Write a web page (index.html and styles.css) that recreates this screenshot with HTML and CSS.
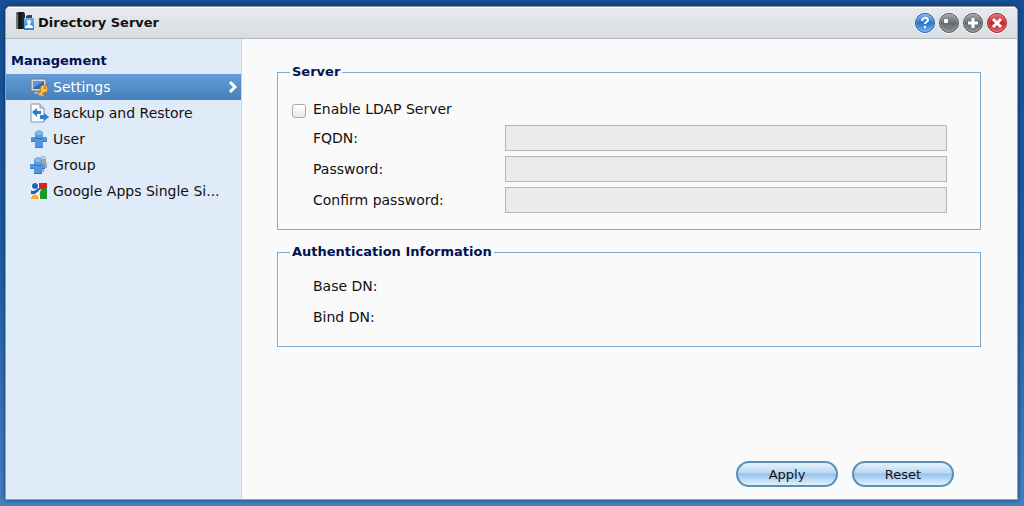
FILE: index.html
```
<!DOCTYPE html>
<html lang="en">
  <head>
    <meta charset="utf-8">
    <title>Directory Server</title>
    <link rel="stylesheet" href="styles.css">
  </head>
  <body>
    <div class="window">
      <header class="titlebar">
        <svg class="titlebar__icon" width="20" height="20" viewBox="0 0 20 20">
          <defs>
            <linearGradient id="tower" x1="0" x2="1"><stop offset="0" stop-color="#555"/><stop offset=".4" stop-color="#111"/><stop offset="1" stop-color="#333"/></linearGradient>
            <linearGradient id="blue" x1="0" x2="0" y1="0" y2="1"><stop offset="0" stop-color="#6cb4f2"/><stop offset="1" stop-color="#2f7fd0"/></linearGradient>
          </defs>
          <path d="M1 2l2-1h6l1 2v15H1z" fill="url(#tower)"/>
          <path d="M1 3v15h2V3z" fill="#777"/>
          <path d="M11 5l2-1h4v3h-6z" fill="#444"/>
          <rect x="9" y="7" width="10" height="12" fill="url(#blue)"/>
          <circle cx="14" cy="11" r="2" fill="#fff"/>
          <path d="M13 12h2v2c2 0 3 1 3 3h-8c0-2 1-3 3-3z" fill="#fff"/>
        </svg>
        <h1 class="titlebar__title">Directory Server</h1>
        <div class="titlebar__buttons">
          <button class="win-button win-button--blue" type="button" aria-label="Help">
            <svg width="20" height="20" viewBox="0 0 20 20"><path d="M7 8c0-4 6-4 6-1 0 2-3 2-3 4M10 13v2" fill="none" stroke="#fff" stroke-width="2"/></svg>
          </button>
          <button class="win-button" type="button" aria-label="Minimize">
            <svg width="20" height="20" viewBox="0 0 20 20"><rect x="5" y="6" width="4" height="4" rx="1" fill="#fff"/></svg>
          </button>
          <button class="win-button" type="button" aria-label="Maximize">
            <svg width="20" height="20" viewBox="0 0 20 20"><path d="M10 5v10M5 10h10" stroke="#fff" stroke-width="3"/></svg>
          </button>
          <button class="win-button win-button--red" type="button" aria-label="Close">
            <svg width="20" height="20" viewBox="0 0 20 20"><path d="M6 6l8 8M14 6l-8 8" stroke="#fff" stroke-width="3"/></svg>
          </button>
        </div>
      </header>

      <div class="content">
        <nav class="sidebar">
          <h2 class="sidebar__title">Management</h2>
          <ul class="menu">
            <li>
              <a class="menu__link menu__link--active" href="#settings">
                <svg width="20" height="20" viewBox="0 0 20 20">
                  <path d="M6 14h6l1 3H5z" fill="#b0b0b0"/>
                  <rect x="2" y="2" width="15" height="12" rx="1" fill="#d5d9dd" stroke="#777"/>
                  <rect x="4" y="4" width="11" height="8" fill="#2c6cb6"/>
                  <path d="M4 4h11L4 11z" fill="#5b98d8"/>
                  <path d="M10 18l5-5" stroke="#b87318" stroke-width="4"/>
                  <circle cx="15" cy="12" r="4" fill="#f7bd50" stroke="#b87318"/>
                  <path d="M10 18l5-5M11 16l3 3" stroke="#f7bd50" stroke-width="2"/>
                  <circle cx="16" cy="11" r="1" fill="#9a6420"/>
                </svg>
                <span class="menu__text">Settings</span>
                <svg class="menu__arrow" width="10" height="14" viewBox="0 0 10 14"><path d="M2 2l5 5-5 5" fill="none" stroke="#fff" stroke-width="3"/></svg>
              </a>
            </li>
            <li>
              <a class="menu__link" href="#backup">
                <svg width="20" height="20" viewBox="0 0 20 20">
                  <path d="M2 1h9l4 4v14H2z" fill="#fbfcfe" stroke="#8b929a"/>
                  <path d="M11 1v4h4" fill="#d5dce4" stroke="#8b929a"/>
                  <path d="M3 9l5-4v3h4v3H8v3z" fill="#2f7fcd"/>
                  <path d="M20 14l-5-4v2h-4v4h4v2z" fill="#2f7fcd"/>
                </svg>
                <span class="menu__text">Backup and Restore</span>
              </a>
            </li>
            <li>
              <a class="menu__link" href="#user">
                <svg width="20" height="20" viewBox="0 0 20 20">
                  <path d="M3 8h14q1 0 1 1v4h-4v5q0 1-1 1H7q-1 0-1-1v-5H2V9q0-1 1-1z" fill="#5096de"/>
                  <path d="M2 12h4v1H2zM14 12h4v1h-4zM6 18h8v1H6z" fill="#3977b9"/>
                  <path d="M6 8h8l-1 2H7z" fill="#3672b5"/>
                  <path d="M6 5c0-5 8-5 8 0v3q-4 2-8 0z" fill="#5a9de2"/>
                  <ellipse cx="10" cy="4" rx="3" ry="2" fill="#86b9ee"/>
                </svg>
                <span class="menu__text">User</span>
              </a>
            </li>
            <li>
              <a class="menu__link" href="#group">
                <svg width="20" height="20" viewBox="0 0 20 20">
                  <path d="M11 4c0-4 6-4 6 0v3l1 1v5h-3v4h-4z" fill="#a3a7ac"/>
                  <path d="M12 4c0-3 4-3 4 0z" fill="#d0d3d6"/>
                  <path d="M2 9h13q1 0 1 1v4h-3v4q0 1-1 1H6q-1 0-1-1v-4H1v-4q0-1 1-1z" fill="#5096de"/>
                  <path d="M1 13h4v1H1zM13 13h3v1h-3zM5 18h8v1H5z" fill="#3977b9"/>
                  <path d="M5 9h8l-1 2H6z" fill="#3672b5"/>
                  <path d="M5 6c0-5 8-5 8 0v3q-4 2-8 0z" fill="#5a9de2"/>
                  <ellipse cx="9" cy="5" rx="3" ry="2" fill="#86b9ee"/>
                </svg>
                <span class="menu__text">Group</span>
              </a>
            </li>
            <li>
              <a class="menu__link" href="#google">
                <svg width="20" height="20" viewBox="0 0 20 20">
                  <path d="M2 2h16v16H2z" fill="#fff"/>
                  <path d="M10 2h8v6h-5l-3 1z" fill="#e21d1d"/>
                  <path d="M18 7v11h-7c1-3-2-5 1-9 1-2 3-2 6-2z" fill="#159a2b"/>
                  <circle cx="6" cy="5" r="3" fill="#1c67b5"/>
                  <path d="M2 9c3 2 5 0 7-2l2 1c-2 4-6 6-9 5z" fill="#1c67b5"/>
                  <path d="M2 18c0-6 8-6 8 0z" fill="#f6ab33"/>
                </svg>
                <span class="menu__text">Google Apps Single Si...</span>
              </a>
            </li>
          </ul>
        </nav>

        <form class="settings" action="">
          <fieldset class="group">
            <legend class="group__title">Server</legend>
            <div class="group__check">
              <input id="enable" class="checkbox" type="checkbox">
              <label for="enable">Enable LDAP Server</label>
            </div>
            <div class="row">
              <label class="row__label" for="fqdn">FQDN:</label>
              <input id="fqdn" class="row__input" type="text" disabled>
            </div>
            <div class="row">
              <label class="row__label" for="password">Password:</label>
              <input id="password" class="row__input" type="password" disabled>
            </div>
            <div class="row">
              <label class="row__label" for="confirm">Confirm password:</label>
              <input id="confirm" class="row__input" type="password" disabled>
            </div>
          </fieldset>

          <fieldset class="group group--info">
            <legend class="group__title">Authentication Information</legend>
            <div class="row"><span class="row__label">Base DN:</span></div>
            <div class="row"><span class="row__label">Bind DN:</span></div>
          </fieldset>

          <div class="actions">
            <button class="button" type="submit">Apply</button>
            <button class="button" type="reset">Reset</button>
          </div>
        </form>
      </div>
    </div>
  </body>
</html>
```

FILE: styles.css
```
* { box-sizing: border-box; }

body {
  margin: 0;
  min-height: 100vh;
  padding: 6px 6px 6px 5px;
  display: flex;
  background: linear-gradient(#164f94, #1d5ca4 50%, #4380bd);
  font-family: Verdana, "DejaVu Sans", sans-serif;
  font-size: 14px;
  line-height: 18px;
  color: #111;
}

.window {
  flex: 1;
  display: flex;
  flex-direction: column;
  border: 1px solid #9b9fa5;
  border-radius: 5px 5px 0 0;
  background: #fafafa;
  box-shadow: 0 0 4px rgba(0, 20, 50, 0.6);
  overflow: hidden;
}

.titlebar {
  display: flex;
  align-items: center;
  height: 32px;
  padding: 0 10px 0 9px;
  border-top: 1px solid #fff;
  border-bottom: 1px solid #b4b6b9;
  background: linear-gradient(#e6eaee, #d8dde1);
}
.titlebar__icon { margin-bottom: 4px; }
.titlebar__title { flex: 1; margin: 0 0 0 3px; font-size: 13px; line-height: 18px; }
.titlebar__buttons { display: flex; gap: 4px; }

.win-button {
  width: 20px;
  height: 20px;
  padding: 0;
  border: 1px solid #55585c;
  border-radius: 50%;
  background: linear-gradient(#a5a8aa, #66696c 50%, #8d9092);
  box-shadow: inset 0 0 0 1px rgba(255, 255, 255, 0.25), 0 1px 1px #fff;
  display: flex;
  align-items: center;
  justify-content: center;
}
.win-button svg { flex: none; }
.win-button--blue { border-color: #1c5ca8; background: linear-gradient(#80b9ed, #2874c8 50%, #72b8f3); }
.win-button--red { border-color: #a51e22; background: linear-gradient(#e07072, #c4262a 50%, #df6060); }

.content { flex: 1; display: flex; }

.sidebar {
  width: 236px;
  padding-top: 13px;
  border-right: 1px solid #d0d4da;
  background: #dfebf9;
}
.sidebar__title { margin: 0; padding: 0 5px 4px; font-size: 13px; line-height: 18px; color: #001351; }

.menu { list-style: none; margin: 0; padding: 0; }
.menu__link {
  display: flex;
  align-items: center;
  gap: 4px;
  height: 26px;
  padding: 0 3px 0 23px;
  color: #111;
  text-decoration: none;
}
.menu__link svg { flex: none; }
.menu__link--active { background: linear-gradient(#669cd8, #4580bb); color: #fff; }
.menu__text { white-space: nowrap; }
.menu__arrow { margin-left: auto; }

.settings {
  flex: 1;
  display: flex;
  flex-direction: column;
  padding: 25px 36px 12px 35px;
}

.group {
  margin: 0 0 14px;
  padding: 20px 33px 16px 12px;
  border: 1px solid #7eabce;
}
.group--info { padding-top: 13px; }
.group__title { padding: 0 2px; font-size: 13px; font-weight: bold; line-height: 16px; color: #001351; }
.group__check { display: flex; align-items: center; gap: 7px; margin-bottom: 7px; padding-left: 2px; }

.checkbox {
  appearance: none;
  width: 14px;
  height: 14px;
  margin: 3px 0 0;
  border: 1px solid #aaa;
  border-radius: 3px;
  background: linear-gradient(#fff, #e8e8e8);
}
.checkbox:checked { background: #4580bb; }

.row { display: flex; align-items: center; min-height: 26px; margin-bottom: 5px; padding-left: 23px; }
.row:last-child { margin-bottom: 0; }
.row__label { width: 192px; }
.row__input {
  flex: 1;
  height: 26px;
  padding: 0 4px;
  border: 1px solid #b5b5b5;
  background: #ebebeb;
  font: inherit;
}

.actions { display: flex; justify-content: flex-end; gap: 14px; margin-top: auto; padding-right: 27px; }
.button {
  width: 102px;
  height: 26px;
  padding: 0;
  border: 2px solid #5a8fb8;
  border-radius: 13px;
  background: linear-gradient(#e5f1fb, #b9d9f3 45%, #97c3ec 50%, #dff2ff);
  font-family: inherit;
  font-size: 13px;
  color: #111;
}
```
